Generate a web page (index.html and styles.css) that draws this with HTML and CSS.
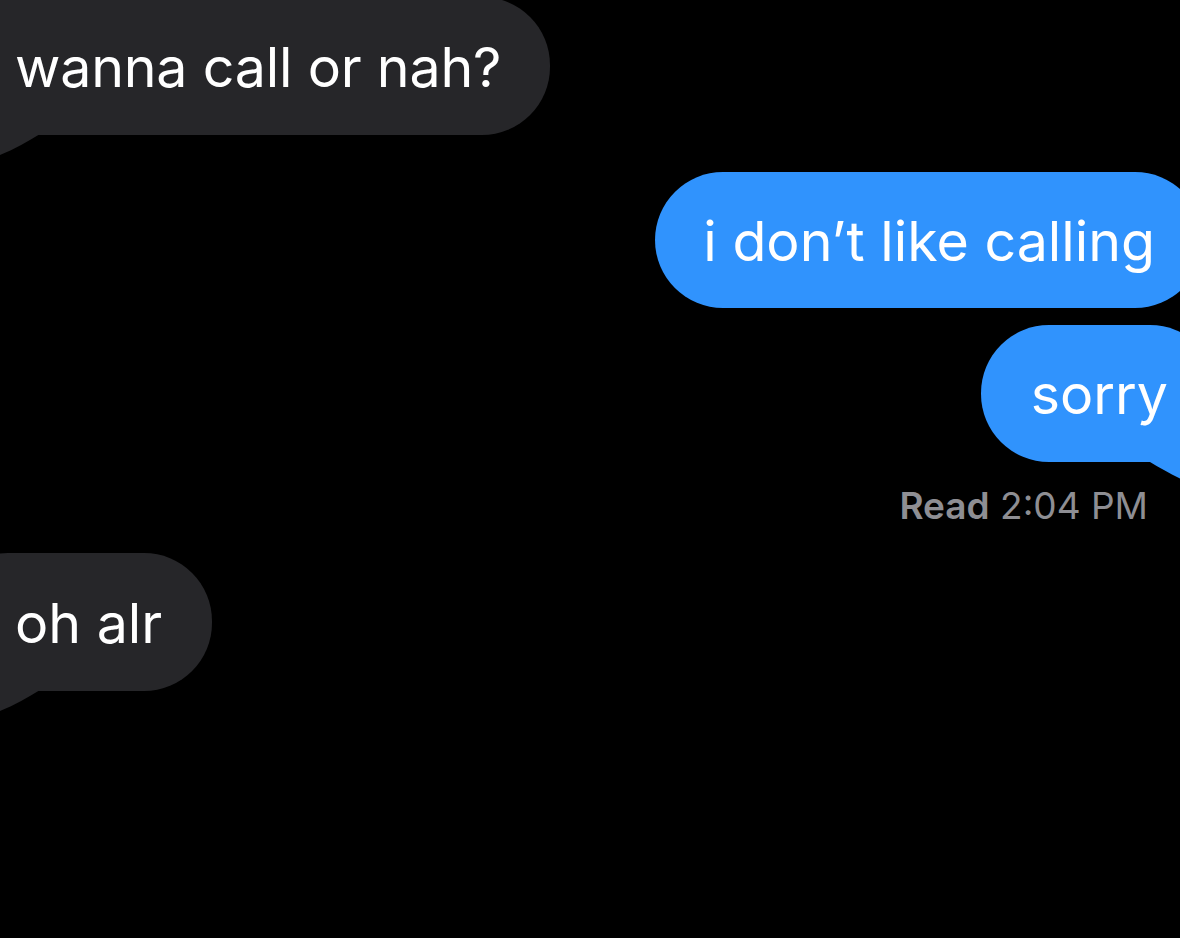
FILE: index.html
```html
<!DOCTYPE html>
<html lang="en">
<head>
    <meta charset="UTF-8">
    <meta name="viewport" content="width=device-width, initial-scale=1.0">
    <title>Messages</title>
    <link rel="stylesheet" href="styles.css">
</head>
<body>

    <div class="thread">

        <!-- Incoming -->
        <div class="bubble incoming first">
            wanna call or nah?
            <svg class="tail" width="100" height="60" viewBox="0 0 100 60"><path d="M30 0 L40 20 C44 40 50 52 56 60 L60 59 C75 53 88 45 100 38 L100 0 Z"/></svg>
        </div>

        <!-- Outgoing -->
        <div class="bubble outgoing calling">i don’t like calling</div>
        <div class="bubble outgoing sorry">
            sorry
            <svg class="tail" width="100" height="60" viewBox="0 0 100 60"><path d="M30 0 L40 20 C44 40 50 52 56 60 L60 59 C75 53 88 45 100 38 L100 0 Z"/></svg>
        </div>
        <div class="receipt"><b>Read</b> 2:04 PM</div>

        <!-- Incoming -->
        <div class="bubble incoming last">
            oh alr
            <svg class="tail" width="100" height="60" viewBox="0 0 100 60"><path d="M30 0 L40 20 C44 40 50 52 56 60 L60 59 C75 53 88 45 100 38 L100 0 Z"/></svg>
        </div>

    </div>

</body>
</html>
```

FILE: styles.css
```css
/* Basic Styles */
body {
    font-family: 'Inter', 'Liberation Sans', sans-serif;
    background-color: #000;
    margin: 0;
    padding: 0;
    overflow: hidden;
    height: 938px;
}

.thread {
    display: flex;
    flex-direction: column;
}

.bubble {
    position: relative;
    display: flex;
    align-items: center;
    height: 138px;
    box-sizing: border-box;
    border-radius: 68px;
    font-size: 55.5px;
    color: #fff;
    white-space: nowrap;
}

.incoming {
    align-self: flex-start;
    background-color: #262629;
    margin-left: -60px;
    padding: 0 50px 0 75px;
}

.incoming .tail {
    position: absolute;
    left: 0;
    bottom: -21px;
    fill: #262629;
}

.outgoing {
    align-self: flex-end;
    background-color: #3093fd;
}

.outgoing .tail {
    position: absolute;
    right: -32px;
    bottom: -22px;
    fill: #3093fd;
    transform: scaleX(-1);
}

.first {
    margin-top: -3px;
    letter-spacing: -0.2px;
    padding-right: 49px;
}

.calling {
    margin-top: 37px;
    margin-right: -23px;
    padding: 0 48px;
    height: 136px;
}

.sorry {
    margin-top: 17px;
    margin-right: -38px;
    padding: 0 50px;
    height: 137px;
}

/* Read receipt under the last sent message */
.receipt {
    align-self: flex-end;
    margin: 22px 32px 0 0;
    font-size: 37px;
    line-height: 44px;
    color: #8e8e93;
}

.receipt b {
    font-weight: 600;
}

.last {
    margin-top: 25px;
}
```
